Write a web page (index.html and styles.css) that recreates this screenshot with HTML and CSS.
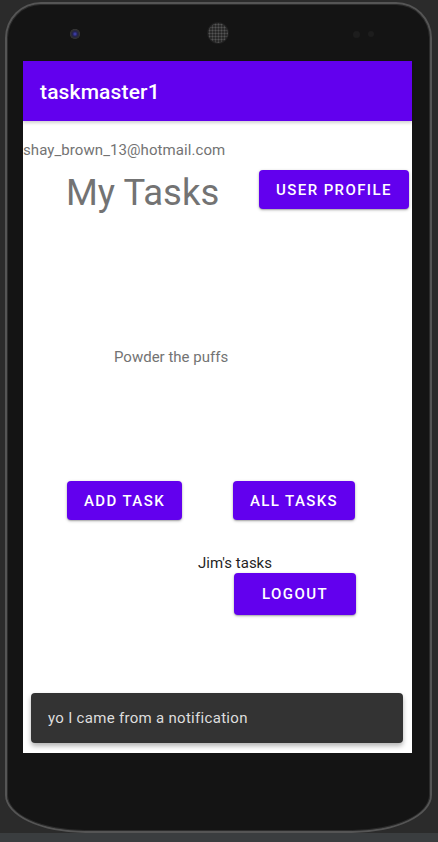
FILE: index.html
```html
<!DOCTYPE html>
<html lang="en">
<head>
<meta charset="utf-8">
<title>taskmaster1</title>
<link rel="stylesheet" href="styles.css">
</head>
<body>
<div class="phone">
  <div class="bezel-top">
    <span class="camera"></span>
    <span class="speaker"></span>
    <span class="sensor s1"></span>
    <span class="sensor s2"></span>
  </div>
  <div class="screen">
    <header class="appbar"><h1 class="appbar-title">taskmaster1</h1></header>
    <main class="content">
      <p class="email">shay_brown_13@hotmail.com</p>
      <div class="row-title">
        <h2 class="my-tasks">My Tasks</h2>
        <button class="btn btn-profile">User Profile</button>
      </div>
      <p class="task-name">Powder the puffs</p>
      <div class="row-buttons">
        <button class="btn btn-add">Add Task</button>
        <button class="btn btn-all">All Tasks</button>
      </div>
      <p class="jims">Jim's tasks</p>
      <button class="btn btn-logout">Logout</button>
      <div class="snackbar">yo I came from a notification</div>
    </main>
  </div>
</div>
<div class="bottom-strip"></div>
</body>
</html>
```

FILE: styles.css
```css
* { box-sizing: border-box; }
html, body { margin: 0; padding: 0; }
body {
  width: 438px;
  height: 842px;
  background: #2b2b2b;
  font-family: Roboto, "Liberation Sans", sans-serif;
  overflow: hidden;
  display: flex;
  flex-direction: column;
  align-items: flex-start;
}
.phone {
  margin: 2px 0 0 5px;
  width: 427px;
  height: 831px;
  flex: none;
  background: #141414;
  border: 2px solid #555555;
  border-radius: 36px 36px 80px 80px / 36px 36px 38px 38px;
  box-shadow: inset 0 0 0 1px #2c2c2c;
  display: flex;
  flex-direction: column;
}
.bezel-top {
  height: 57px;
  flex: none;
  display: flex;
  align-items: flex-start;
}
.camera {
  margin: 25px 0 0 63px;
  width: 10px; height: 10px;
  border-radius: 50%;
  background: radial-gradient(circle at 50% 50%, #4646c0 0, #22224e 35%, #2e2e2e 60%, #7a7a7a 100%);
}
.speaker {
  margin: 19px 0 0 128px;
  width: 20px; height: 20px;
  border-radius: 50%;
  background-color: #2a2a2a;
  background-image: radial-gradient(circle, #555 0.8px, transparent 1.2px);
  background-size: 3px 3px;
  box-shadow: 0 0 0 1px #1e1e1e;
}
.sensor {
  margin-top: 27px;
  width: 6px; height: 6px;
  border-radius: 50%;
  background: #1d1d1d;
}
.s1 { margin-left: 125px; width: 7px; height: 7px; }
.s2 { margin-left: 8px; }
.screen {
  margin-left: 16px;
  width: 389px;
  height: 692px;
  background: #fff;
  display: flex;
  flex-direction: column;
}
.appbar {
  height: 60px;
  flex: none;
  background: #6200ee;
  display: flex;
  align-items: center;
  padding: 2px 0 0 17px;
  box-shadow: 0 2px 3px rgba(0,0,0,0.18);
  position: relative;
  z-index: 1;
}
.appbar-title {
  margin: 0;
  color: #fff;
  font-size: 21px;
  font-weight: 500;
  line-height: 24px;
  letter-spacing: 0.15px;
}
.content {
  flex: 1;
  position: relative;
  display: flex;
  flex-direction: column;
  align-items: flex-start;
}
.email {
  margin: 20px 0 0 0;
  font-size: 15px;
  line-height: 18px;
  letter-spacing: 0.08px;
  color: #737373;
}
.row-title {
  margin-top: 11px;
  width: 100%;
  display: flex;
  align-items: flex-start;
}
.my-tasks {
  margin: 1px 0 0 43px;
  font-size: 36.5px;
  line-height: 43px;
  font-weight: 400;
  color: #737373;
}
.btn {
  border: none;
  border-radius: 4px;
  background: #6200ee;
  color: #fff;
  font-family: Roboto, "Liberation Sans", sans-serif;
  font-size: 15px;
  font-weight: 500;
  letter-spacing: 1.4px;
  text-transform: uppercase;
  height: 39px;
  padding: 0;
  box-shadow: 0 1px 3px rgba(0,0,0,0.3), 0 1px 1px rgba(0,0,0,0.12);
  display: flex;
  align-items: center;
  justify-content: center;
}
.btn-profile { margin-left: auto; margin-right: 3px; width: 150px; }
.task-name {
  margin: 134px 0 0 91px;
  font-size: 15px;
  line-height: 18px;
  color: #737373;
}
.row-buttons {
  margin: 115px 0 0 44px;
  display: flex;
  gap: 51px;
}
.btn-add { width: 115px; }
.btn-all { width: 122px; }
.jims {
  margin: 34px 0 0 175px;
  font-size: 15px;
  line-height: 18px;
  color: #1f1f1f;
}
.btn-logout { margin: 1px 0 0 211px; width: 122px; height: 42px; }
.snackbar {
  position: absolute;
  left: 8px;
  right: 9px;
  bottom: 10px;
  height: 50px;
  background: #333333;
  border-radius: 4px;
  box-shadow: 0 3px 5px rgba(0,0,0,0.3);
  color: #dedede;
  font-size: 15px;
  line-height: 18px;
  letter-spacing: 0.3px;
  display: flex;
  align-items: center;
  padding-left: 17px;
}
.bottom-strip {
  flex: 1;
  width: 100%;
  background: #3a3d3f;
}
```
